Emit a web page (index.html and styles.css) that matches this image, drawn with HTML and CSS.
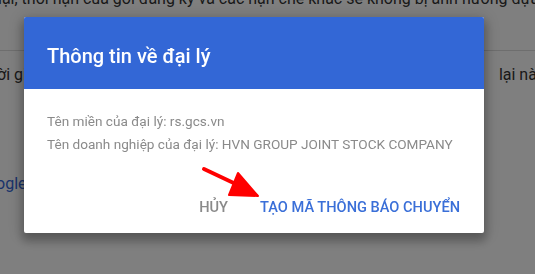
FILE: index.html
```html
<!DOCTYPE html>
<html lang="vi">
<head>
  <meta charset="UTF-8">
  <title>Thông tin về đại lý</title>
  <link rel="stylesheet" href="styles.css">
</head>
<body>

<div class="page">
  <p class="page-line top-line">lại, thời hạn của gói đăng ký và các hạn chế khác sẽ không bị ảnh hưởng dựa trên</p>
  <div class="divider"></div>
  <div class="page-line split-line">
    <span>ời giữa các nhà đăng ký</span>
    <span>lại nào</span>
  </div>
  <a class="page-link" href="#">Google</a>
</div>

<div class="backdrop"></div>

<div class="dialog">
  <div class="dialog-header">
    <h2>Thông tin về đại lý</h2>
  </div>
  <div class="dialog-body">
    <p>Tên miền của đại lý: rs.gcs.vn</p>
    <p>Tên doanh nghiệp của đại lý: HVN GROUP JOINT STOCK COMPANY</p>
  </div>
  <div class="dialog-actions">
    <button class="btn btn-cancel">Hủy</button>
    <button class="btn btn-primary">Tạo mã thông báo chuyển</button>
  </div>
</div>

<svg class="arrow" width="535" height="274" viewBox="0 0 535 274">
  <line x1="204" y1="169" x2="240" y2="186" stroke="#ff0000" stroke-width="4" stroke-linecap="round"/>
  <polygon points="238,173 229,195 258,196" fill="#ff0000" stroke="#ff0000" stroke-width="2" stroke-linejoin="round"/>
</svg>

</body>
</html>
```

FILE: styles.css
```css
body {
  margin: 0;
  width: 535px;
  height: 274px;
  overflow: hidden;
  background: #ffffff;
  font-family: Roboto, "Noto Sans", sans-serif;
  color: #222;
}

.page {
  position: relative;
  height: 274px;
}

.page-line {
  margin: 0;
  font-size: 16px;
  white-space: nowrap;
  color: #333;
}

.top-line {
  margin-top: -12px;
  margin-left: -2px;
  line-height: 22px;
}

.divider {
  margin-top: 40px;
  border-top: 1px solid #dcdcdc;
}

.split-line {
  display: flex;
  justify-content: space-between;
  width: 549px;
  margin-top: 12px;
  margin-left: -3px;
  line-height: 24px;
}

.page-link {
  display: block;
  margin-top: 87px;
  margin-left: -24px;
  font-size: 16px;
  color: #3367d6;
  text-decoration: none;
}

.backdrop {
  position: fixed;
  inset: 0;
  background: rgba(0, 0, 0, 0.5);
}

.dialog {
  position: fixed;
  left: 24px;
  top: 17px;
  width: 460px;
  height: 216px;
  background: #fff;
  border-radius: 2px;
  box-shadow: 0 6px 10px 2px rgba(0, 0, 0, 0.25), 0 2px 16px 4px rgba(0, 0, 0, 0.12);
  display: flex;
  flex-direction: column;
  overflow: hidden;
}

.dialog-header {
  background: #3367d6;
  height: 72px;
  padding: 5px 23px 0;
  box-sizing: border-box;
  display: flex;
  align-items: center;
}

.dialog-header h2 {
  margin: 0;
  font-size: 20px;
  font-weight: 500;
  color: #fff;
}

.dialog-body {
  padding: 21px 23px 0;
}

.dialog-body p {
  margin: 0;
  font-size: 13.6px;
  line-height: 23px;
  white-space: nowrap;
  color: #8a8a8a;
}

.dialog-actions {
  margin-top: auto;
  padding: 0 16px 11px;
  display: flex;
  justify-content: flex-end;
  gap: 16px;
}

.btn {
  border: none;
  background: none;
  padding: 6px 8px;
  font-family: Roboto, "Noto Sans", sans-serif;
  font-size: 14.6px;
  font-weight: 500;
  text-transform: uppercase;
  cursor: pointer;
}

.btn-cancel {
  color: #8a8a8a;
}

.btn-primary {
  color: #3a6fd8;
}

.arrow {
  position: fixed;
  left: 0;
  top: 0;
  pointer-events: none;
}
```
